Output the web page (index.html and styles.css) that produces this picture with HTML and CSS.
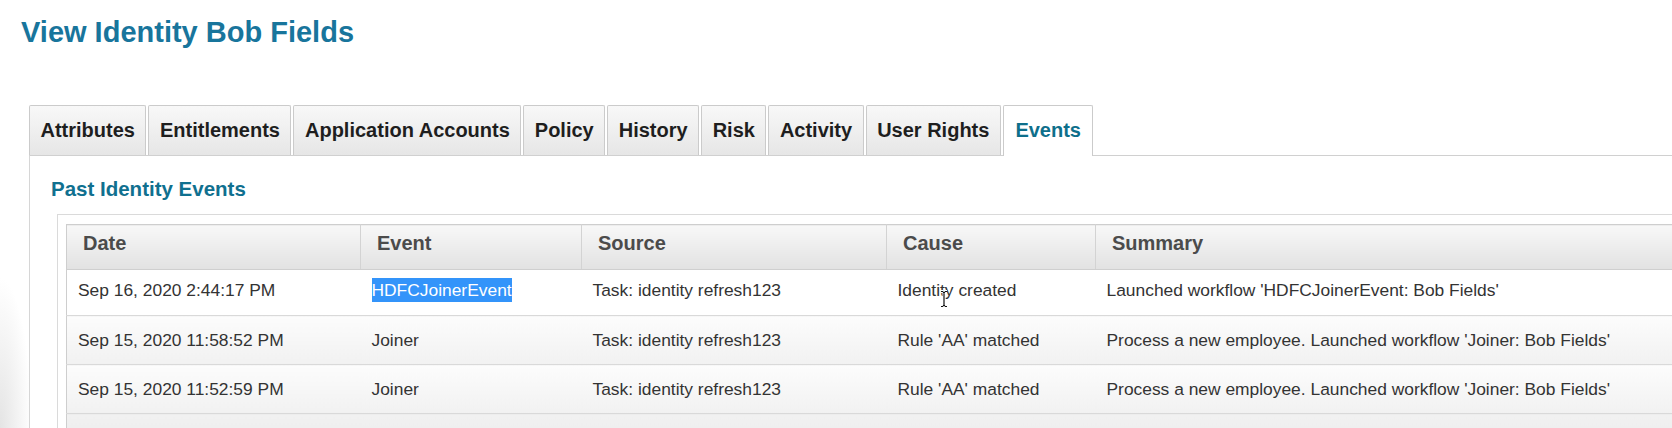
FILE: index.html
```html
<!DOCTYPE html>
<html>
<head>
<meta charset="utf-8">
<link rel="stylesheet" href="styles.css">
</head>
<body>
<div class="page">
  <h1 class="title">View Identity Bob Fields</h1>
  <div class="tabs">
    <div class="tab">Attributes</div>
    <div class="tab">Entitlements</div>
    <div class="tab">Application Accounts</div>
    <div class="tab">Policy</div>
    <div class="tab">History</div>
    <div class="tab">Risk</div>
    <div class="tab">Activity</div>
    <div class="tab">User Rights</div>
    <div class="tab active">Events</div>
  </div>
  <div class="panel">
    <h2 class="subtitle">Past Identity Events</h2>
    <div class="frame">
      <table class="grid">
        <colgroup>
          <col class="c-date"><col class="c-event"><col class="c-source"><col class="c-cause"><col class="c-summary">
        </colgroup>
        <thead>
          <tr><th>Date</th><th>Event</th><th>Source</th><th>Cause</th><th>Summary</th></tr>
        </thead>
        <tbody>
          <tr class="r-white">
            <td>Sep 16, 2020 2:44:17 PM</td>
            <td><span class="sel">HDFCJoinerEvent</span></td>
            <td>Task: identity refresh123</td>
            <td class="cause-cell">Identity created<svg class="ibeam" width="10" height="18" viewBox="0 0 10 18"><path d="M2 1.5h2.2M5.8 1.5H8M5 2v14M2 16.5h2.2M5.8 16.5H8M4 2.2l1 0.6l1-0.6M4 15.8l1-0.6l1 0.6" stroke="#fff" stroke-width="3" fill="none"/><path d="M2 1.5h2.2M5.8 1.5H8M5 2v14M2 16.5h2.2M5.8 16.5H8M4 2.2l1 0.6l1-0.6M4 15.8l1-0.6l1 0.6" stroke="#111" stroke-width="1.2" fill="none"/></svg></td>
            <td>Launched workflow 'HDFCJoinerEvent: Bob Fields'</td>
          </tr>
          <tr class="r-gray">
            <td>Sep 15, 2020 11:58:52 PM</td>
            <td>Joiner</td>
            <td>Task: identity refresh123</td>
            <td>Rule 'AA' matched</td>
            <td>Process a new employee. Launched workflow 'Joiner: Bob Fields'</td>
          </tr>
          <tr class="r-gray">
            <td>Sep 15, 2020 11:52:59 PM</td>
            <td>Joiner</td>
            <td>Task: identity refresh123</td>
            <td>Rule 'AA' matched</td>
            <td>Process a new employee. Launched workflow 'Joiner: Bob Fields'</td>
          </tr>
          <tr class="r-last">
            <td></td><td></td><td></td><td></td><td></td>
          </tr>
        </tbody>
      </table>
    </div>
  </div>
</div>
</body>
</html>
```
FILE: styles.css
```css
html, body {
  margin: 0;
  padding: 0;
}
body {
  width: 1672px;
  height: 428px;
  overflow: hidden;
  font-family: "Liberation Sans", Arial, sans-serif;
  background-color: #ffffff;
  background-image: radial-gradient(ellipse 32px 150px at 0 100%, #e4e4e4, rgba(255, 255, 255, 0));
  background-size: 40px 160px;
  background-position: 0 100%;
  background-repeat: no-repeat;
}
.page {
  display: flex;
  flex-direction: column;
  height: 428px;
  overflow: hidden;
}
.title {
  margin: 16px 0 0 21px;
  font-size: 29px;
  line-height: 33px;
  font-weight: bold;
  color: #18759c;
}
.tabs {
  display: flex;
  gap: 2px;
  margin: 56px 0 0 29px;
  position: relative;
  z-index: 1;
}
.tab {
  box-sizing: border-box;
  height: 50px;
  padding: 0 10.5px;
  display: flex;
  align-items: center;
  font-size: 20px;
  font-weight: bold;
  color: #1e1e1e;
  border: 1px solid #cbcbcb;
  border-bottom: none;
  border-radius: 2px 2px 0 0;
  background: linear-gradient(#f8f8f8, #e6e6e6);
}
.tab.active {
  height: 51px;
  margin-bottom: -1px;
  background: #ffffff;
  color: #0e6f8b;
  padding: 0 11.5px 1px 11.5px;
}
.panel {
  flex: 1;
  min-height: 0;
  margin-left: 29px;
  border-top: 1px solid #d0d0d0;
  border-left: 1px solid #d6d6d6;
  display: flex;
  flex-direction: column;
  overflow: hidden;
  background: #ffffff;
}
.subtitle {
  margin: 21px 0 0 21px;
  font-size: 20.5px;
  line-height: 24px;
  font-weight: bold;
  color: #10708f;
}
.frame {
  flex: 1;
  min-height: 0;
  overflow: hidden;
  margin: 13px 0 0 27px;
  border-top: 1px solid #dadada;
  border-left: 1px solid #dadada;
  padding: 9px 0 0 8px;
}
.grid {
  border-collapse: collapse;
  table-layout: fixed;
  width: 1700px;
  border: 1px solid #cecece;
}
.c-date { width: 294px; }
.c-event { width: 221px; }
.c-source { width: 305px; }
.c-cause { width: 209px; }
.c-summary { width: 671px; }
.grid th {
  height: 37px;
  padding: 0 0 7px 16px;
  text-align: left;
  font-size: 20px;
  font-weight: bold;
  color: #4b4b4b;
  background: linear-gradient(#f8f8f8, #e2e2e2);
  border-right: 1px solid #d3d3d3;
  border-bottom: 1px solid #cfcfcf;
}
.grid td {
  height: 48px;
  padding: 0 0 0 11px;
  font-size: 17.4px;
  color: #333333;
  white-space: nowrap;
  border-bottom: 1px solid #d9d9d9;
}
.r-white td {
  height: 40px;
  padding-bottom: 5px;
  background: #ffffff;
}
.r-gray td {
  background: linear-gradient(#fcfcfc, #f1f1f1);
}
.r-last td {
  background: linear-gradient(#f1f1f1, #e9e9e9);
}
.sel {
  background: #3394fa;
  color: #ffffff;
  padding: 2px 0 2px 0;
}
.cause-cell {
  position: relative;
}
.ibeam {
  position: absolute;
  left: 52px;
  top: 20px;
}
```
